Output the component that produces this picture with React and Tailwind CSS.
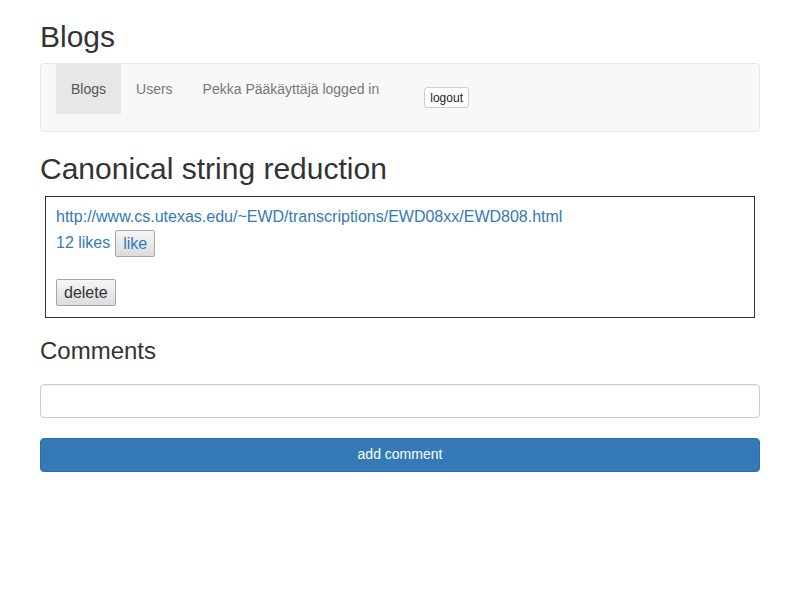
export default function App() {
  return (
    <div className="min-h-[600px] bg-white text-[#333] text-[14px] leading-[1.42857] font-['Liberation_Sans',Arial,sans-serif]">
      <div className="w-[720px] mx-auto">
        <h2 className="pt-[20px] mb-[10px] text-[30px] leading-[33px] font-normal">Blogs</h2>

        <nav className="h-[69px] bg-[#f8f8f8] border border-[#e7e7e7] rounded-[4px] px-[15px] flex items-start">
          <a className="px-[15px] py-[15px] leading-5 bg-[#e7e7e7] text-[#555]">Blogs</a>
          <a className="px-[15px] py-[15px] leading-5 text-[#777]">Users</a>
          <span className="px-[15px] py-[15px] leading-5 text-[#777]">Pekka Pääkäyttäjä logged in</span>
          <button className="ml-[30px] mt-[23px] h-[21px] px-[5px] bg-white border border-[#cfcfcf] rounded-[3px] text-[12px] leading-none text-[#222]">
            logout
          </button>
        </nav>

        <h2 className="mt-[20px] mb-[11px] text-[30px] leading-[33px] font-normal">Canonical string reduction</h2>

        <div className="mx-[5px] border border-[#333] pt-[10px] pb-[11px] px-[10px] text-[16px]">
          <a className="block leading-5 text-[#337ab7]">http://www.cs.utexas.edu/~EWD/transcriptions/EWD08xx/EWD808.html</a>
          <div className="mt-[3px] flex items-center gap-[5px] text-[#337ab7]">
            <span>12 likes</span>
            <button className="h-[27px] px-[7px] border border-[#a6a6a6] rounded-[2px] bg-gradient-to-b from-[#f6f6f6] to-[#dcdcdc] text-[#337ab7] leading-none">
              like
            </button>
          </div>
          <div className="mt-[22px]">
            <button className="h-[27px] px-[7px] border border-[#a6a6a6] rounded-[2px] bg-gradient-to-b from-[#f6f6f6] to-[#dcdcdc] text-[#333] leading-none">
              delete
            </button>
          </div>
        </div>

        <h3 className="mt-[20px] mb-[20px] text-[24px] leading-[26px] font-normal">Comments</h3>

        <input
          type="text"
          className="block w-full h-[34px] px-3 border border-[#ccc] rounded-[4px] shadow-[inset_0_1px_1px_rgba(0,0,0,0.075)] outline-none"
        />

        <button className="mt-[20px] block w-full h-[34px] bg-[#337ab7] border border-[#2e6da4] rounded-[4px] text-white text-[14px]">
          add comment
        </button>
      </div>
    </div>
  );
}
